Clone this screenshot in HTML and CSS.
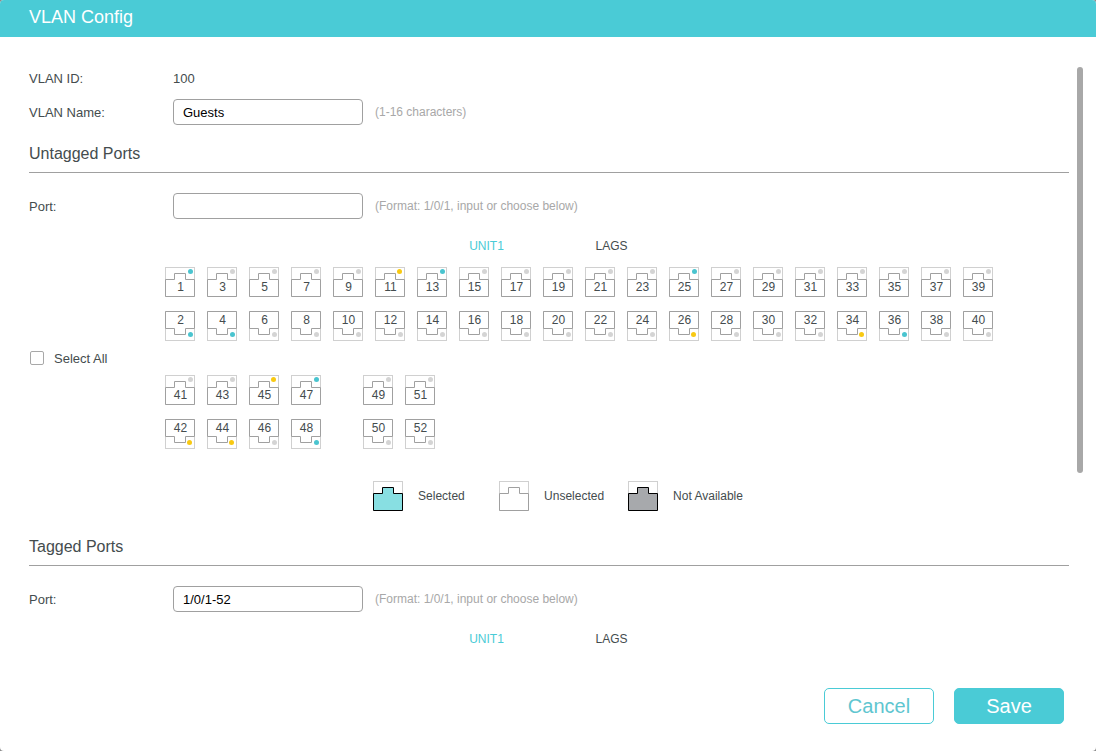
FILE: index.html
```html
<!DOCTYPE html>
<html lang="en">
<head>
<meta charset="utf-8">
<title>VLAN Config</title>
<link rel="stylesheet" href="styles.css">
</head>
<body>
<form class="dialog">
  <header class="dialog-header"><h1 class="dialog-title">VLAN Config</h1></header>

  <div class="viewport">
    <div class="scroll">
      <div class="row">
        <span class="label">VLAN ID:</span>
        <span class="value">100</span>
      </div>
      <div class="row row-field">
        <label class="label" for="vlan-name">VLAN Name:</label>
        <input class="field" id="vlan-name" type="text" value="Guests" maxlength="16">
        <span class="hint">(1-16 characters)</span>
      </div>

      <section class="section">
        <h2 class="section-title">Untagged Ports</h2>
        <div class="row">
          <label class="label" for="untagged-port">Port:</label>
          <input class="field" id="untagged-port" type="text">
          <span class="hint">(Format: 1/0/1, input or choose below)</span>
        </div>
        <nav class="tabs">
          <button class="tab tab-active" type="button">UNIT1</button>
          <button class="tab" type="button">LAGS</button>
        </nav>
        <div class="panel">
          <label class="select-all"><input class="check" type="checkbox">Select All</label>
          <div class="banks">
            <div class="bank-line"><div class="bank" data-first="1" data-last="40"></div></div>
            <div class="bank-line">
              <div class="bank" data-first="41" data-last="48"></div>
              <div class="bank" data-first="49" data-last="52"></div>
            </div>
          </div>
        </div>
        <div class="legend">
          <span class="legend-item">
            <svg class="socket socket-selected" viewBox="0 0 30 30"><rect class="frame" x=".5" y=".5" width="29" height="29"/><path class="jack" d="M.5 12.5h9v-6h11v6h9v17H.5z"/></svg>
            Selected
          </span>
          <span class="legend-item">
            <svg class="socket" viewBox="0 0 30 30"><rect class="frame" x=".5" y=".5" width="29" height="29"/><path class="jack" d="M.5 12.5h9v-6h11v6h9v17H.5z"/></svg>
            Unselected
          </span>
          <span class="legend-item">
            <svg class="socket socket-na" viewBox="0 0 30 30"><rect class="frame" x=".5" y=".5" width="29" height="29"/><path class="jack" d="M.5 12.5h9v-6h11v6h9v17H.5z"/></svg>
            Not Available
          </span>
        </div>
      </section>

      <section class="section section-next">
        <h2 class="section-title">Tagged Ports</h2>
        <div class="row">
          <label class="label" for="tagged-port">Port:</label>
          <input class="field" id="tagged-port" type="text" value="1/0/1-52">
          <span class="hint">(Format: 1/0/1, input or choose below)</span>
        </div>
        <nav class="tabs">
          <button class="tab tab-active" type="button">UNIT1</button>
          <button class="tab" type="button">LAGS</button>
        </nav>
      </section>
    </div>
    <div class="thumb"></div>
  </div>

  <footer class="dialog-footer">
    <button class="btn btn-outline" type="button">Cancel</button>
    <button class="btn btn-solid" type="submit">Save</button>
  </footer>
</form>
<script src="ports.js"></script>
</body>
</html>
```
FILE: ports.js
```js
// Link state of each port; a port that is not listed is down.
const GIGABIT = [1, 2, 4, 13, 25, 36, 47, 48];
const FAST = [11, 26, 34, 42, 44, 45];

// Odd ports face up in the top row, even ports face down in the bottom row.
function portButton(n) {
  const up = n % 2 === 1;
  const fast = FAST.includes(n);
  const state = fast ? "led-fast" : GIGABIT.includes(n) ? "led-gigabit" : "led-down";
  const jack = up
    ? "M.5 12.5h9v-6h11v6h9v17H.5z"
    : "M.5.5h29v17h-9v6h-11v-6h-9z";
  return `<button class="port ${up ? "port-up" : "port-down"}" type="button">
    <svg class="socket" viewBox="0 0 30 30">
      <rect class="frame" x=".5" y=".5" width="29" height="29"/>
      <path class="jack" d="${jack}"/>
      <circle class="${state}" cx="${fast ? 24.5 : 25.5}" cy="${up ? 4.5 : 23.5}" r="2.5"/>
    </svg>
    <span class="port-number">${n}</span>
  </button>`;
}

document.querySelectorAll(".bank").forEach((bank) => {
  let html = "";
  for (let n = Number(bank.dataset.first); n <= Number(bank.dataset.last); n++) {
    html += portButton(n);
  }
  bank.innerHTML = html;
});
```
FILE: styles.css
```css
* {
  box-sizing: border-box;
}

html {
  background: #8c8c8c;
}

body {
  margin: 0;
  font-family: "Liberation Sans", Arial, sans-serif;
  font-size: 13px;
  color: #444c4e;
}

button,
input {
  font-family: inherit;
  margin: 0;
}

.dialog {
  display: flex;
  flex-direction: column;
  height: 100vh;
  overflow: hidden;
  border-radius: 4px;
  background: #fff;
}

.dialog-header {
  padding: 5px 29px 8px;
  background: #4acbd6;
}

.dialog-title {
  margin: 0;
  font-size: 18px;
  font-weight: 400;
  line-height: 24px;
  color: #fff;
}

.viewport {
  position: relative;
  flex: 1;
  min-height: 0;
  margin-top: 30px;
}

.scroll {
  height: 100%;
  padding: 0 27px 0 29px;
  overflow-y: auto;
  scrollbar-width: none;
}

.thumb {
  position: absolute;
  top: 0;
  right: 13px;
  width: 6px;
  height: 69%;
  border-radius: 3px;
  background: #a8a8a8;
}

.row {
  display: flex;
  align-items: center;
  min-height: 22px;
}

.row-field {
  margin-top: 10px;
}

.label {
  width: 144px;
}

.field {
  width: 190px;
  height: 26px;
  padding: 0 9px;
  border: 1px solid #a0a0a0;
  border-radius: 4px;
  background: #fff;
  font-size: 13px;
  color: #000;
}

.hint {
  margin-left: 12px;
  font-size: 12px;
  color: #a8a8a8;
}

.section {
  margin-top: 16px;
}

.section-next {
  margin-top: 23px;
}

.section-title {
  margin: 0 0 20px;
  padding-bottom: 5px;
  border-bottom: 1px solid #a0a0a0;
  font-size: 16px;
  font-weight: 400;
  line-height: 26px;
}

.tabs {
  display: flex;
  justify-content: center;
  margin: 17px 0 11px;
}

.tab {
  width: 125px;
  padding: 0;
  border: 0;
  background: none;
  font-size: 12px;
  line-height: 20px;
  color: #444c4e;
}

.tab-active {
  color: #4acbd6;
}

.panel {
  display: flex;
  align-items: center;
}

.select-all {
  display: flex;
  align-items: center;
  gap: 10px;
  width: 136px;
  padding-left: 1px;
}

.check {
  appearance: none;
  width: 14px;
  height: 14px;
  border: 1px solid #a8a8a8;
  border-radius: 2px;
  background: #fff;
}

.banks {
  display: grid;
  gap: 34px;
}

.bank-line {
  display: flex;
  gap: 42px;
}

.bank {
  display: grid;
  grid-template-rows: auto auto;
  grid-auto-flow: column;
  gap: 14px 12px;
}

.port {
  display: grid;
  padding: 0;
  border: 0;
  background: none;
  font-size: 12px;
  line-height: 18px;
  color: #444c4e;
}

.port > * {
  grid-area: 1 / 1;
}

.port-number {
  padding-left: 1px;
}

.port-up .port-number {
  align-self: end;
  padding-bottom: 1px;
}

.socket {
  display: block;
  width: 30px;
  height: 30px;
}

.frame {
  fill: #fff;
  stroke: #d0d0d0;
}

.jack {
  fill: #fff;
  stroke: #a0a0a0;
}

.socket-selected .jack {
  fill: #88dfe2;
  stroke: #000;
}

.socket-na .jack {
  fill: #a7a9ac;
  stroke: #000;
}

.led-down {
  fill: #d4d4d4;
}

.led-gigabit {
  fill: #4ac4cf;
}

.led-fast {
  fill: #f8c912;
}

.legend {
  display: flex;
  justify-content: center;
  gap: 24px;
  margin-top: 32px;
  padding-left: 18px;
  font-size: 12px;
}

.legend-item {
  display: flex;
  align-items: center;
  gap: 15px;
  min-width: 102px;
}

.dialog-footer {
  display: flex;
  justify-content: flex-end;
  gap: 20px;
  padding: 32px 32px 27px;
}

.btn {
  width: 110px;
  height: 36px;
  padding: 0;
  border: 1px solid #4acbd6;
  border-radius: 5px;
  font-size: 20px;
}

.btn-outline {
  background: #fff;
  color: #5fc6d0;
}

.btn-solid {
  background: #4acbd6;
  color: #fff;
}
```
